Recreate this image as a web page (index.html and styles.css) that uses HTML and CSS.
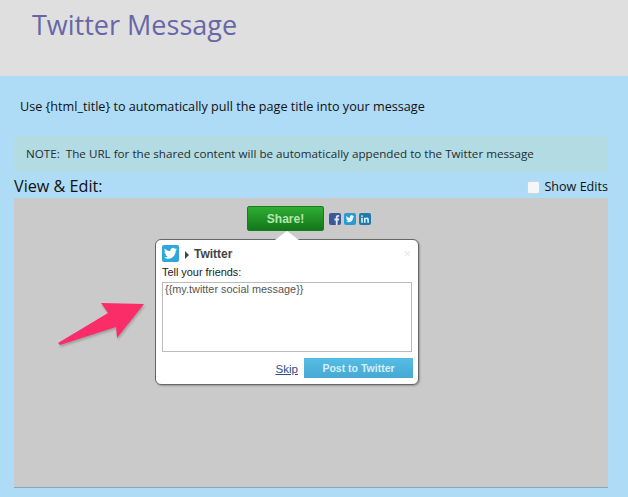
FILE: index.html
```html
<!DOCTYPE html>
<html lang="en">
<head>
    <meta charset="UTF-8">
    <link rel="stylesheet" href="styles.css">
    <title>Twitter Message</title>
</head>
<body>
    <div class="header">
        <h1>Twitter Message</h1>
    </div>
    <div class="content">
        <p class="intro">Use {html_title} to automatically pull the page title into your message</p>
        <div class="note">NOTE:&nbsp; The URL for the shared content will be automatically appended to the Twitter message</div>
        <div class="toolbar">
            <span class="view-label">View &amp; Edit:</span>
            <label class="show-edits"><span class="check"></span>Show Edits</label>
        </div>
        <div class="canvas">
            <div class="share-row">
                <button class="share-btn">Share!</button>
                <div class="social">
                    <svg class="social-icon" viewBox="0 0 12 12"><rect width="12" height="12" rx="2" fill="#3b5998"/><path d="M8.6 12V7.4h1.3l.3-1.8H8.6V4.6c0-.5.2-.8.8-.8h.8V2.2C10 2.1 9.5 2.1 9 2.1c-1.3 0-2.2.8-2.2 2.3v1.2H5.4v1.8h1.4V12z" fill="#dfe6f2"/></svg>
                    <svg class="social-icon" viewBox="0 0 12 12"><rect width="12" height="12" rx="2" fill="#2a9bd0"/><path d="M10.3 3.4c-.3.1-.6.2-1 .3.4-.2.6-.6.8-1-.3.2-.7.4-1.1.4a1.7 1.7 0 0 0-3 1.6C4.5 4.6 3.3 4 2.4 2.9c-.5.8-.2 1.8.5 2.3-.3 0-.5-.1-.8-.2 0 .8.6 1.5 1.4 1.7-.3.1-.5.1-.8 0 .2.7.9 1.2 1.6 1.2-.7.6-1.7.8-2.6.7 2.9 1.8 7.3.4 7.4-4.1.5-.3.8-.7 1.2-1.1z" fill="#eaf6fc"/></svg>
                    <svg class="social-icon" viewBox="0 0 12 12"><rect width="12" height="12" rx="2" fill="#1f7bab"/><path d="M2.2 4.7h1.6v5.1H2.2zM3 2.2a.9.9 0 1 1 0 1.800.9.9 0 0 1 0-1.800zM5 4.700h1.500v.7c.3-.5.800-.8 1.500-.8 1.400 0 1.900.9 1.900 2.300v2.900H8.300V7.200c0-.7-.2-1.200-.8-1.200s-.9.500-.9 1.200v2.600H5z" fill="#e6f2f8"/></svg>
                </div>
            </div>
            <div class="popup">
                <span class="popup-tip"></span>
                <div class="popup-head">
                    <svg class="tw-logo" viewBox="0 0 17 17"><rect width="17" height="17" rx="2" fill="#2fa6dc"/><path d="M15 4.300c-.5.200-1 .3-1.500.4.500-.3 1-.8 1.200-1.500-.5.300-1.100.5-1.700.6a2.700 2.700 0 0 0-4.600 2.500C6.200 6.200 4.200 5.200 2.900 3.500c-.7 1.200-.4 2.800.8 3.600-.4 0-.8-.1-1.200-.3 0 1.300.9 2.400 2.100 2.700-.4.100-.8.100-1.200 0 .4 1.100 1.400 1.800 2.500 1.900-1.100.9-2.500 1.300-3.900 1.100 4.700 2.900 11.400.6 11.700-6.800.5-.3.900-.8 1.300-1.400z" fill="#fff"/></svg>
                    <span class="caret"></span>
                    <span class="popup-title">Twitter</span>
                    <span class="popup-close">×</span>
                </div>
                <div class="popup-label">Tell your friends:</div>
                <div class="message">{{my.twitter social message}}</div>
                <div class="popup-foot">
                    <a class="skip" href="#">Skip</a>
                    <button class="post-btn">Post to Twitter</button>
                </div>
            </div>
            <svg class="pointer" viewBox="0 0 90 50" width="90" height="50">
                <path d="M1 48 L51 18 L44 8 L87 9 L60 43 L59 32 L3 50 Z" fill="#fa2d68"/>
            </svg>
        </div>
    </div>
</body>
</html>
```

FILE: styles.css
```css
body, h1, p { margin: 0; padding: 0; }
body {
    background: #aedbf5;
    font-family: "Open Sans", sans-serif;
    color: #111;
    height: 497px;
    overflow: hidden;
}
.header {
    height: 76px;
    background: #dfdfdf;
    padding: 6px 0 0 32px;
    box-sizing: border-box;
}
.header h1 {
    font-size: 27px;
    line-height: 38px;
    font-weight: 400;
    color: #6767a8;
}
.content {
    padding: 0 20px 0 14px;
}
.intro {
    font-size: 12.63px;
    line-height: 18px;
    padding: 22px 0 0 6px;
}
.note {
    margin-top: 20px;
    height: 36px;
    background: #b3dbe3;
    padding-left: 12px;
    font-size: 11.65px;
    line-height: 36px;
    color: #1f2d2f;
}
.toolbar {
    display: flex;
    justify-content: space-between;
    align-items: flex-end;
    height: 26px;
}
.view-label {
    font-size: 16.2px;
    line-height: 24px;
}
.show-edits {
    display: flex;
    align-items: center;
    gap: 4px;
    font-size: 12.6px;
    line-height: 22px;
}
.check {
    width: 11px;
    height: 11px;
    background: #f4f6f8;
    border: 1px solid #c9d6de;
    border-radius: 2px;
}
.canvas {
    position: relative;
    height: 289px;
    background: #cacaca;
    border-bottom: 1px solid #8fa3b4;
}
.share-row {
    display: flex;
    align-items: center;
    padding: 8px 0 0 233px;
}
.share-btn {
    width: 77px;
    height: 25px;
    padding: 0;
    border: 1px solid #1a7a1e;
    border-radius: 2px;
    background: linear-gradient(#2fae33, #12771a);
    color: #b5e6b0;
    font-family: "Liberation Sans", sans-serif;
    font-size: 12px;
    font-weight: 700;
}
.social {
    display: flex;
    gap: 3px;
    margin-left: 5px;
}
.social-icon {
    width: 12px;
    height: 12px;
}
.popup {
    position: relative;
    width: 264px;
    height: 146px;
    box-sizing: border-box;
    margin: 8px 0 0 141px;
    padding: 5px 6px 0;
    background: #fff;
    border: 1px solid #666;
    border-radius: 6px;
    box-shadow: 1px 1px 2px rgba(0, 0, 0, 0.25);
    font-family: "Liberation Sans", sans-serif;
}
.popup-tip {
    position: absolute;
    top: -9px;
    left: 119px;
    width: 0;
    height: 0;
    border-left: 12px solid transparent;
    border-right: 12px solid transparent;
    border-bottom: 9px solid #fff;
}
.popup-head {
    display: flex;
    align-items: center;
    height: 17px;
}
.tw-logo {
    width: 17px;
    height: 17px;
}
.caret {
    margin: 2px 5px 0 6px;
    border-left: 4px solid #444;
    border-top: 4px solid transparent;
    border-bottom: 4px solid transparent;
}
.popup-title {
    font-size: 12px;
    font-weight: 700;
    color: #444;
}
.popup-close {
    margin-left: auto;
    margin-right: 1px;
    font-size: 13px;
    color: #e8e8e8;
}
.popup-label {
    margin-top: 3px;
    font-size: 10.9px;
    line-height: 14px;
    color: #222;
}
.message {
    margin-top: 3px;
    height: 70px;
    box-sizing: border-box;
    width: 250px;
    border: 1px solid #bbb;
    padding: 0 2px;
    font-size: 10.9px;
    line-height: 12px;
    color: #555;
}
.popup-foot {
    display: flex;
    justify-content: flex-end;
    align-items: center;
    gap: 6px;
    margin-top: 6px;
    margin-right: -1px;
}
.skip {
    font-size: 11.6px;
    color: #2c4f8c;
}
.post-btn {
    width: 109px;
    height: 20px;
    padding: 0;
    border: 0;
    background: linear-gradient(#55bde4, #46a9d3);
    color: #d8eef7;
    font-family: "Liberation Sans", sans-serif;
    font-size: 10.5px;
    font-weight: 700;
}
.pointer {
    position: absolute;
    left: 43px;
    top: 97px;
    filter: drop-shadow(1px 2px 1px rgba(0, 0, 0, 0.2));
}
```
